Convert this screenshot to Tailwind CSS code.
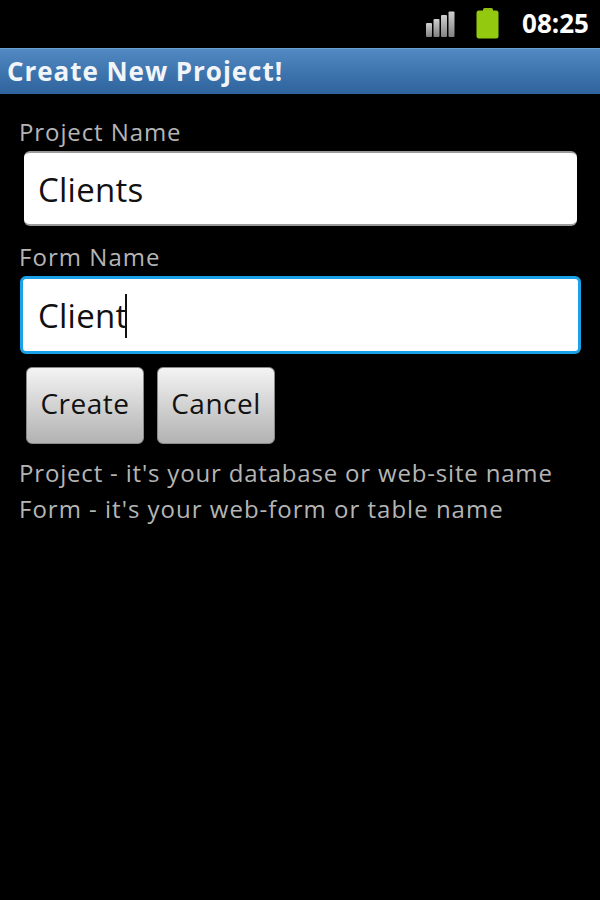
<!DOCTYPE html>
<html><head><meta charset="utf-8"><script src="https://cdn.jsdelivr.net/npm/@tailwindcss/browser@4"></script></head>
<body class="bg-black">
<div class="w-[600px] h-[900px] bg-black overflow-hidden font-['Open_Sans','Noto_Sans',sans-serif]">
  <div class="h-[48px] flex items-center justify-end pr-[11px]">
    <svg width="30" height="28" viewBox="0 0 30 28" class="mr-[21px] -mt-[1px]">
      <defs><linearGradient id="g" x1="0" y1="0" x2="0" y2="1"><stop offset="0" stop-color="#d0d0d0"/><stop offset="1" stop-color="#808080"/></linearGradient></defs>
      <rect x="1" y="13" width="6" height="14" rx="1" fill="url(#g)"/>
      <rect x="8.500" y="9" width="6" height="18" rx="1" fill="url(#g)"/>
      <rect x="16" y="5" width="6" height="22" rx="1" fill="url(#g)"/>
      <rect x="23.500" y="1.500" width="6" height="25.500" rx="1" fill="url(#g)"/>
    </svg>
    <svg width="24" height="31" viewBox="0 0 24 31" class="mr-[22px] -mt-[2px]">
      <rect x="7" y="0" width="10" height="4" rx="1.500" fill="#8fc010"/>
      <rect x="0.500" y="2.500" width="22" height="28" rx="2.500" fill="#93c90e"/>
    </svg>
    <span class="text-white font-bold text-[26px] leading-none -mt-[2px]">08:25</span>
  </div>
  <div class="h-[46px] flex items-center pl-[7px] pb-[2px] bg-gradient-to-b from-[#5189c2] to-[#2e639c] border-t border-[#6a9dd0]">
    <span class="text-[#f2f5f8] font-bold text-[26px] leading-none tracking-[0.95px]">Create New Project!</span>
  </div>
  <div class="px-[20px] pt-[20px]">
    <div class="text-[#b5b5b5] text-[24px] leading-[36px] h-[36px] tracking-[0.9px] -ml-[1px]">Project Name</div>
    <div class="ml-[4px] mr-[3px] mt-[1px] h-[75px] bg-white rounded-[6px] border-t-2 border-b-2 border-[#9a9a9a] flex items-center px-[14px] pt-[1px]">
      <span class="text-[#111] text-[33px] leading-none tracking-[0.25px]">Clients</span>
    </div>
    <div class="text-[#b5b5b5] text-[24px] leading-[36px] h-[36px] mt-[13px] tracking-[1.05px] -ml-[1px]">Form Name</div>
    <div class="mt-[1px] w-[561px] h-[78px] bg-white rounded-[6px] border-[3px] border-[#1ba1e6] flex items-center pl-[15px] pt-[1px]">
      <span class="text-[#111] text-[33px] leading-none tracking-[0.25px]">Client</span>
      <span class="w-[2px] h-[44px] bg-[#111] -ml-[2px]"></span>
    </div>
    <div class="flex gap-[13px] mt-[13px] pl-[6px]">
      <div class="w-[118px] h-[77px] rounded-[6px] bg-gradient-to-b from-[#f4f4f4] to-[#b2b2b2] border border-[#8a8a8a] flex items-center justify-center text-[#111] text-[28px] leading-none pb-[5px] tracking-[0.5px]">Create</div>
      <div class="w-[118px] h-[77px] rounded-[6px] bg-gradient-to-b from-[#f4f4f4] to-[#b2b2b2] border border-[#8a8a8a] flex items-center justify-center text-[#111] text-[28px] leading-none pb-[5px] tracking-[0.5px]">Cancel</div>
    </div>
    <div class="mt-[11px] -ml-[1px] text-[#b5b5b5] text-[24px] leading-[36px] whitespace-nowrap">
      <div class="tracking-[0.82px]">Project - it's your database or web-site name</div>
      <div class="tracking-[1px]">Form - it's your web-form or table name</div>
    </div>
  </div>
</div>
</body></html>
